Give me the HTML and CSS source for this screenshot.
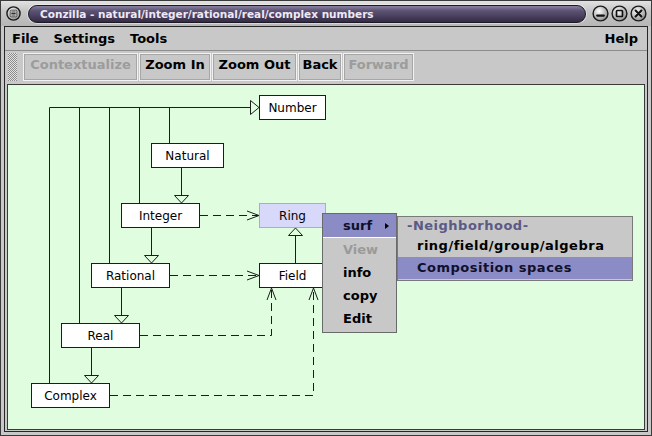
FILE: index.html
```html
<!DOCTYPE html>
<html>
<head>
<meta charset="utf-8">
<title>Conzilla</title>
<link rel="stylesheet" href="styles.css">
</head>
<body>
<div class="window">
  <div class="titlebar">
    <svg class="tb-icon" width="15" height="15" viewBox="0 0 15 15">
      <defs><radialGradient id="ga" cx="40%" cy="35%" r="70%"><stop offset="0" stop-color="#ffffff"/><stop offset="1" stop-color="#8a8a8a"/></radialGradient></defs>
      <circle cx="7.5" cy="7.5" r="6.6" fill="url(#ga)" stroke="#1a1a1a" stroke-width="1.4"/>
      <rect x="4.2" y="4.2" width="6.6" height="6.6" rx="1.2" fill="#ececec" stroke="#2a2a2a" stroke-width="0.8"/>
      <path d="M5.3 6H9.7M5.3 7.5H9.7M5.3 9H9.7" stroke="#1a1a1a" stroke-width="0.9"/>
    </svg>
    <div class="title-pill">Conzilla - natural/integer/rational/real/complex numbers</div>
    <div class="tb-buttons">
      <svg width="17" height="17" viewBox="0 0 17 17">
        <defs><radialGradient id="gb" cx="40%" cy="35%" r="70%"><stop offset="0" stop-color="#ffffff"/><stop offset="1" stop-color="#8a8a8a"/></radialGradient></defs>
        <circle cx="8.5" cy="8.5" r="7.4" fill="url(#gb)" stroke="#1a1a1a" stroke-width="1.4"/>
        <path d="M5.2 10.6H11.8" stroke="#111" stroke-width="2.2" stroke-linecap="round"/>
      </svg>
      <svg width="17" height="17" viewBox="0 0 17 17">
        <defs><radialGradient id="gc" cx="40%" cy="35%" r="70%"><stop offset="0" stop-color="#ffffff"/><stop offset="1" stop-color="#8a8a8a"/></radialGradient></defs>
        <circle cx="8.5" cy="8.5" r="7.4" fill="url(#gc)" stroke="#1a1a1a" stroke-width="1.4"/>
        <rect x="5.5" y="5.5" width="6" height="6" rx="0.8" fill="none" stroke="#111" stroke-width="1.7"/>
      </svg>
      <svg width="17" height="17" viewBox="0 0 17 17">
        <defs><radialGradient id="gd" cx="40%" cy="35%" r="70%"><stop offset="0" stop-color="#ffffff"/><stop offset="1" stop-color="#8a8a8a"/></radialGradient></defs>
        <circle cx="8.5" cy="8.5" r="7.4" fill="url(#gd)" stroke="#1a1a1a" stroke-width="1.4"/>
        <path d="M5.6 5.6L11.4 11.4M11.4 5.6L5.6 11.4" stroke="#111" stroke-width="2.1" stroke-linecap="round"/>
      </svg>
    </div>
  </div>
  <div class="frame">
    <div class="menubar">
      <span class="menu">File</span>
      <span class="menu">Settings</span>
      <span class="menu">Tools</span>
      <span class="menu help">Help</span>
    </div>
    <div class="toolbar">
      <div class="grip"></div>
      <div class="btn disabled b-ctx">Contextualize</div>
      <div class="btn b-zin">Zoom In</div>
      <div class="btn b-zout">Zoom Out</div>
      <div class="btn b-back">Back</div>
      <div class="btn disabled b-fwd">Forward</div>
    </div>
    <div class="canvas">
      <svg class="diagram" width="635" height="344" viewBox="8 85 635 344">
        <g fill="none" stroke="#1c1c1c" stroke-width="1">
          <path d="M49.5 107.5H250.5M49.5 107.5V383M79.5 107.5V323M109.5 107.5V263M139.5 107.5V203M169.5 107.5V143M181.5 167V195.5M151.5 227V255.5M121.5 287V315.5M91.5 347V375.5M295.5 263V235.5"/>
          <path d="M200 215.5H258M170 275.5H258M140 335.5H271.5V290M110 395.5H313.5V290" stroke-dasharray="8 5"/>
          <path d="M247 211L259 215.5L247 220M247 271L259 275.5L247 280M267 300L271.5 288L276 300M309 300L313.5 288L318 300"/>
        </g>
        <g fill="#e1fde0" stroke="#1c1c1c" stroke-width="1">
          <polygon points="250.5,100.5 259,107.5 250.5,114.5"/>
          <polygon points="174.5,195.5 188.5,195.5 181.5,203"/>
          <polygon points="144.5,255.5 158.5,255.5 151.5,263"/>
          <polygon points="114.5,315.5 128.5,315.5 121.5,323"/>
          <polygon points="84.5,375.5 98.5,375.5 91.5,383"/>
          <polygon points="288.5,235.5 302.5,235.5 295.5,228"/>
        </g>
        <g class="node">
          <rect x="259.5" y="95.5" width="66" height="24"/><text x="292.5" y="107.5">Number</text>
          <rect x="151.5" y="143.5" width="72" height="24"/><text x="187.5" y="155.5">Natural</text>
          <rect x="121.5" y="203.5" width="78" height="24"/><text x="160.5" y="215.5">Integer</text>
          <rect class="ring" x="259.5" y="203.5" width="66" height="24"/><text x="292.5" y="215.5">Ring</text>
          <rect x="91.5" y="263.5" width="78" height="24"/><text x="130.5" y="275.5">Rational</text>
          <rect x="259.5" y="263.5" width="66" height="24"/><text x="292.5" y="275.5">Field</text>
          <rect x="61.5" y="323.5" width="78" height="24"/><text x="100.5" y="335.5">Real</text>
          <rect x="31.5" y="383.5" width="78" height="24"/><text x="70.5" y="395.5">Complex</text>
        </g>
      </svg>
    </div>
  </div>
</div>
<div class="popup">
  <div class="pitem sel"><span>surf</span><span class="arrow"></span></div>
  <div class="pitem off">View</div>
  <div class="pitem">info</div>
  <div class="pitem">copy</div>
  <div class="pitem">Edit</div>
</div>
<div class="submenu">
  <div class="shead">-Neighborhood-</div>
  <div class="sitem">ring/field/group/algebra</div>
  <div class="sitem sel">Composition spaces</div>
</div>
</body>
</html>
```

FILE: styles.css
```css
* { box-sizing: border-box; }
html, body { margin: 0; padding: 0; }
body {
  width: 652px;
  height: 436px;
  overflow: hidden;
  background: #c8c8c8;
  font-family: "DejaVu Sans", "Noto Sans", sans-serif;
  color: #000;
}
.window {
  width: 652px;
  height: 436px;
  border: 1px solid #3a3a3a;
  background: #c8c8c8;
  padding: 0 3px 3px 3px;
  display: flex;
  flex-direction: column;
}
.titlebar {
  height: 25px;
  flex: none;
  margin: 0 -3px;
  padding-left: 5px;
  display: flex;
  align-items: center;
  background: linear-gradient(#e2e2e2, #c6c6c6 40%, #b6b6b6);
}
.tb-icon { flex: none; display: block; }
.title-pill {
  margin-left: 7px;
  width: 558px;
  height: 18px;
  flex: none;
  border-radius: 9px;
  border: 1px solid #1c1824;
  background: linear-gradient(#8a82a0 0%, #5c5274 30%, #463c5a 70%, #342b42 100%);
  box-shadow: 0 0 0 1px rgba(255,255,255,0.45);
  color: #efe9f6;
  font-size: 10.5px;
  font-weight: bold;
  line-height: 16px;
  padding-left: 11px;
  white-space: nowrap;
  overflow: hidden;
}
.tb-buttons {
  margin-left: 6px;
  display: flex;
  gap: 2px;
}
.tb-buttons svg { display: block; }
.frame {
  flex: 1;
  min-height: 0;
  border: 1px solid #262626;
  display: flex;
  flex-direction: column;
}
.menubar {
  height: 24px;
  flex: none;
  border-bottom: 1px solid #8c8c8c;
  display: flex;
  padding: 0 9px 0 7px;
  font-size: 13px;
  font-weight: bold;
  line-height: 23px;
}
.menu { margin-right: 15px; }
.menu.help { margin-left: auto; margin-right: 0; }
.toolbar {
  height: 33px;
  flex: none;
  display: flex;
  gap: 1px;
  padding: 2px 0 0 3px;
}
.grip {
  width: 9px;
  height: 28px;
  margin-right: 5px;
  background: repeating-conic-gradient(#8a8a8a 0 25%, #e4e4e4 0 50%) 0 0 / 2px 2px;
}
.btn {
  height: 28px;
  line-height: 22px;
  font-size: 13px;
  font-weight: bold;
  text-align: center;
  white-space: nowrap;
  border: 1px solid #f2f2f2;
  box-shadow: inset 0 0 0 1px #a6a6a6;
}
.btn.disabled { color: #9c9c9c; }
.b-ctx { width: 115px; }
.b-zin { width: 72px; }
.b-zout { width: 85px; }
.b-back { width: 44px; }
.b-fwd { width: 71px; }
.canvas {
  flex: 1;
  min-height: 0;
  margin: 0 2px 1px 2px;
  border: 1px solid #3a3a3a;
  background: #e1fde0;
  overflow: hidden;
}
.diagram { display: block; }
.node rect { fill: #ffffff; stroke: #1c1c1c; stroke-width: 1; }
.node rect.ring { fill: #d8d8fa; stroke: #a8a8e2; }
.node text {
  font-family: "DejaVu Sans", sans-serif;
  font-size: 12px;
  fill: #000;
  text-anchor: middle;
  dominant-baseline: central;
}
.popup {
  position: absolute;
  left: 322px;
  top: 213px;
  width: 75px;
  height: 120px;
  background: #c8c8c8;
  border: 1px solid #6a6a6a;
  font-size: 13px;
  font-weight: bold;
}
.pitem {
  height: 23px;
  line-height: 23px;
  padding-left: 20px;
}
.pitem.sel {
  height: 24px;
  background: #8b8bc6;
  border-bottom: 1px solid #ffffff;
  display: flex;
  justify-content: space-between;
  align-items: center;
  padding-right: 7px;
  color: #10102a;
}
.pitem.off { color: #9a9a9a; }
.arrow {
  width: 0;
  height: 0;
  border-top: 3.5px solid transparent;
  border-bottom: 3.5px solid transparent;
  border-left: 4px solid #000;
}
.submenu {
  position: absolute;
  left: 397px;
  top: 216px;
  width: 236px;
  height: 65px;
  background: #c8c8c8;
  border: 1px solid #7a7a7a;
  font-size: 13px;
  font-weight: bold;
  letter-spacing: 0.5px;
}
.shead {
  height: 18px;
  line-height: 18px;
  padding-left: 9px;
  color: #5c5a84;
}
.sitem {
  height: 22px;
  line-height: 22px;
  padding-left: 19px;
}
.sitem.sel { background: #8b8bc6; color: #10102a; }
```
